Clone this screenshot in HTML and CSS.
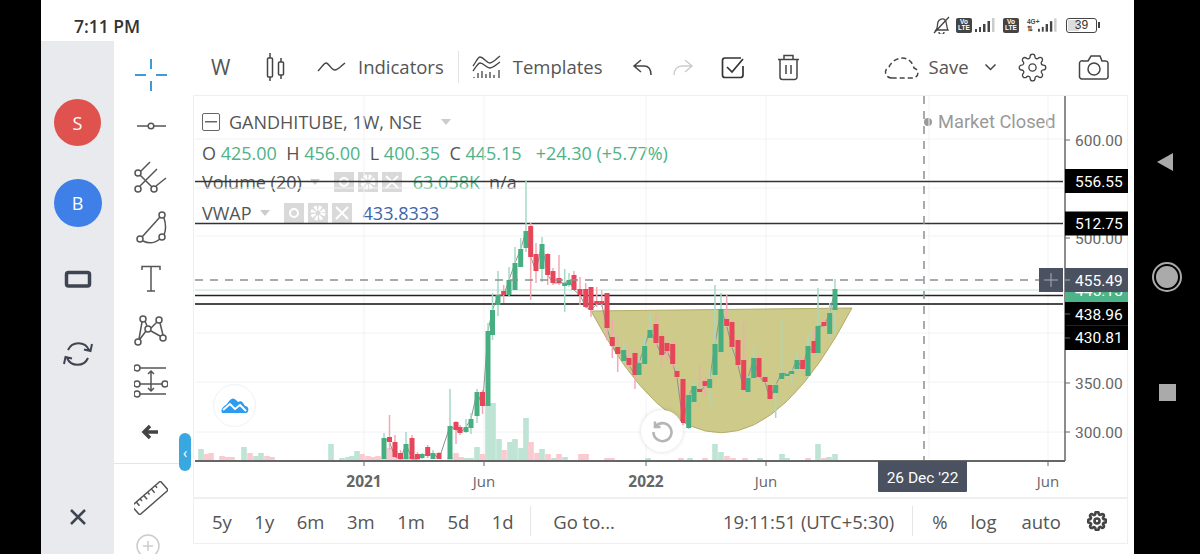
FILE: index.html
```html
<!DOCTYPE html>
<html lang="en">
<head>
    <meta charset="UTF-8">
    <meta name="viewport" content="width=device-width, initial-scale=1.0">
    <title>GANDHITUBE chart</title>
    <link rel="stylesheet" href="styles.css">
</head>
<body>
<div class="screen">
    <div class="phone">
        <div class="status">
            <span class="clock">7:11 PM</span>
            <div class="status-icons">
                <svg class="bell" viewBox="933 16 17 18"><path d="M936 30c2-2 1-5 2-8 1-3 5-4 7-2 2 2 1 6 3 10z M939 32a2.500 2.500 0 0 0 5 0 M934 33 949 17"/></svg>
                <span class="volte">Vo<br>LTE</span>
                <svg class="signal" viewBox="0 0 21 16"><rect x="0" y="12" width="2" height="3"/><rect x="4" y="10" width="2" height="5"/><rect x="8" y="7" width="2.500" height="8"/><rect x="12.500" y="4" width="2.500" height="11"/><rect class="off" x="17" y="1" width="2.500" height="14"/></svg>
                <span class="volte second">Vo<br>LTE</span>
                <span class="net">4G+<br>⇅</span>
                <svg class="signal short" viewBox="0 0 21 16"><rect x="0" y="12" width="2" height="3"/><rect x="4" y="10" width="2" height="5"/><rect x="8" y="7" width="2.500" height="8"/><rect x="12.500" y="4" width="2.500" height="11"/><rect class="off" x="17" y="1" width="2.500" height="14"/></svg>
                <span class="battery"><span class="battery-fill"></span><span class="battery-num">39</span></span>
                <span class="battery-tip"></span>
            </div>
        </div>

        <div class="app">
            <aside class="rail">
                <div class="avatar red">S</div>
                <div class="avatar blue">B</div>
                <svg class="rail-icon screen-icon" viewBox="60 262 34 34"><rect x="65.500" y="272.500" width="23" height="13.500" rx="2"/></svg>
                <svg class="rail-icon sync-icon" viewBox="60 337 34 34"><path d="M67 350A11.500 11.500 0 0 1 88 350 M91 344 89.500 351 83 349.500 M87 358A11.500 11.500 0 0 1 66 358 M63 364 64.500 357 71 358.500"/></svg>
                <svg class="rail-icon close-icon" viewBox="60 500 34 34"><path d="M70 510 84 524 M84 510 70 524"/></svg>
            </aside>

            <aside class="tools">
                <div class="tool-list">
                    <svg class="tool cross" viewBox="134 58 34 34"><path d="M135 75H146 M156 75H167 M151 59V69 M151 81V91"/></svg>
                    <svg class="tool" viewBox="134 109 34 34"><path d="M137 126H148 M154 126H166"/><circle cx="151" cy="126" r="2.800"/></svg>
                    <svg class="tool" viewBox="134 159 34 34"><path d="M140 174 152 186 M141 170 150 161 M140 185 157 168 M156 185 166 177"/><circle cx="138" cy="172" r="3"/><circle cx="138" cy="188" r="3"/><circle cx="154" cy="188" r="3"/></svg>
                    <svg class="tool" viewBox="134 211 34 34"><path d="M142 237 160 217 M164 218C166 224 166 230 164 235 M143 241C149 244 155 243 160 239"/><circle cx="162" cy="215" r="3"/><circle cx="140" cy="239" r="3"/><circle cx="162" cy="237" r="3"/></svg>
                    <svg class="tool" viewBox="134 261 34 34"><path d="M142 269V265.500H160V269 M151 265.500V290 M147 290H155"/></svg>
                    <svg class="tool" viewBox="134 311 34 34"><path d="M139 337 142 320 M140 337 146 329 M145 319 147 324 M151 326 157 320 M160 321 163 333 M151 329 160 334"/><circle cx="143" cy="317" r="3"/><circle cx="159" cy="318" r="3"/><circle cx="148" cy="327" r="3"/><circle cx="138" cy="340" r="3"/><circle cx="163" cy="336" r="3"/></svg>
                    <svg class="tool" viewBox="134 363 34 34"><path d="M140 367H166 M140 383H162 M140 393H166 M151 371V389 M148 373 151 370 154 373 M148 387 151 390 154 387"/><circle cx="137" cy="367" r="3"/><circle cx="137" cy="383" r="3"/><circle cx="165" cy="383" r="3"/><circle cx="137" cy="393" r="3"/></svg>
                    <svg class="tool back" viewBox="134 414 34 34"><path d="M150 425 144 431 150 437 M146 431H158"/></svg>
                </div>
                <div class="tool-foot">
                    <svg class="tool" viewBox="134 481 34 34"><g transform="rotate(-41 150 498)"><rect x="131" y="492" width="38" height="12" rx="1.500"/><path d="M137 492V497 M142 492V495 M147 492V497 M152 492V495 M157 492V497 M162 492V495"/></g></svg>
                    <svg class="tool plus" viewBox="134 532 28 28"><circle cx="148" cy="546" r="11"/><path d="M148 541V551 M143 546H153"/></svg>
                </div>
                <button class="collapse">‹</button>
            </aside>

            <main class="workspace">
                <div class="topbar">
                    <span class="tb-label tf">W</span>
                    <svg class="tb-icon candles" viewBox="264 52 24 30"><rect x="267.500" y="58" width="5" height="19" rx="1"/><rect x="278.500" y="62" width="5" height="13" rx="1"/><path d="M270 53V58 M270 77V81 M281 58V62 M281 75V79"/></svg>
                    <svg class="tb-icon wave" viewBox="316 60 30 18"><path d="M318 73C322 69 324 65 326 65 329 65 331 72 335 72 338 72 341 68 345 65"/></svg>
                    <span class="tb-label ind">Indicators</span>
                    <span class="tb-sep"></span>
                    <svg class="tb-icon tmpl" viewBox="472 54 30 26"><path d="M473 66C476 62 478 57 480 57 484 57 486 63 490 63 493 63 496 59 500 56 M473 71C476 67 478 63 480 63 484 63 486 68 490 68 493 68 496 65 500 62 M474 78V77 M478 78V73 M482 78V71 M486 78V74 M490 78V72 M494 78V75 M499 78V70"/></svg>
                    <span class="tb-label tpl">Templates</span>
                    <svg class="tb-icon undo" viewBox="631 57 22 20"><path d="M640 60 633 66 640 72 M633 66H643C648 66 650 70 650 75"/></svg>
                    <svg class="tb-icon redo" viewBox="671 57 22 20"><path d="M684 60 691 66 684 72 M691 66H681C676 66 673 70 673 75"/></svg>
                    <svg class="tb-icon check" viewBox="720 55 26 24"><path d="M741 58H725A2.500 2.500 0 0 0 722.500 60.500V75A2.500 2.500 0 0 0 725 77.500H741A2.500 2.500 0 0 0 743 75V66 M727 67 732 72 743 59"/></svg>
                    <svg class="tb-icon trash" viewBox="776 53 24 28"><path d="M778 59.500H799 M784 59V55.500H793V59 M780 60V77A2.500 2.500 0 0 0 782.500 79.500H794.500A2.500 2.500 0 0 0 797 77V60 M786 65V74 M791 65V74"/></svg>
                    <svg class="tb-icon cloud" viewBox="884 54 36 26"><path d="M892 78C885 78 883 70 889 67 893 57 910 53 914 68 920 70 919 78 912 78Z"/></svg>
                    <span class="tb-label save">Save</span>
                    <svg class="tb-icon chev" viewBox="985 62 13 10"><path d="M986.500 64.500 991.500 69.500 996.500 64.500"/></svg>
                    <svg class="tb-icon gear" viewBox="0 0 24 24"><circle cx="12" cy="12" r="3"/><path d="M19.400 15a1.650 1.650 0 0 0 .33 1.820l.06.06a2 2 0 0 1 0 2.830 2 2 0 0 1-2.830 0l-.06-.06a1.650 1.650 0 0 0-1.820-.33 1.650 1.650 0 0 0-1 1.510V21a2 2 0 0 1-2 2 2 2 0 0 1-2-2v-.09A1.650 1.650 0 0 0 9 19.400a1.650 1.650 0 0 0-1.820.33l-.06.06a2 2 0 0 1-2.830 0 2 2 0 0 1 0-2.830l.06-.06a1.650 1.650 0 0 0 .33-1.820 1.650 1.650 0 0 0-1.510-1H3a2 2 0 0 1-2-2 2 2 0 0 1 2-2h.09A1.650 1.650 0 0 0 4.600 9a1.650 1.650 0 0 0-.33-1.820l-.06-.06a2 2 0 0 1 0-2.830 2 2 0 0 1 2.830 0l.06.06a1.650 1.650 0 0 0 1.820.33H9a1.650 1.650 0 0 0 1-1.510V3a2 2 0 0 1 2-2 2 2 0 0 1 2 2v.09a1.650 1.650 0 0 0 1 1.510 1.650 1.650 0 0 0 1.820-.33l.06-.06a2 2 0 0 1 2.830 0 2 2 0 0 1 0 2.830l-.06.06a1.650 1.650 0 0 0-.33 1.820V9a1.650 1.650 0 0 0 1.510 1H21a2 2 0 0 1 2 2 2 2 0 0 1-2 2h-.09a1.650 1.650 0 0 0-1.510 1z"/></svg>
                    <svg class="tb-icon camera" viewBox="1078 54 31 26"><path d="M1083 61H1088L1091 56H1100L1102 61H1105A2.500 2.500 0 0 1 1108 63.500V76A2.500 2.500 0 0 1 1105 79H1082A2.500 2.500 0 0 1 1079.500 76V63.500A2.500 2.500 0 0 1 1083 61Z"/><circle cx="1094" cy="69" r="6"/></svg>
                </div>

                <div class="chart">
                    <div class="legend">
                        <div class="legend-row title">
                            <span class="fold"></span>
                            <span>GANDHITUBE, 1W, NSE</span>
                            <span class="caret big"></span>
                        </div>
                        <div class="legend-row ohlc">
                            O <b>425.00</b>&nbsp; H <b>456.00</b>&nbsp; L <b>400.35</b>&nbsp; C <b>445.15</b>&nbsp;&nbsp; <b>+24.30 (+5.77%)</b>
                        </div>
                        <div class="legend-row study vol">
                            <span>Volume (20)</span>
                            <span class="caret"></span>
                            <span class="study-btns">
                                <i class="sq"><svg viewBox="0 0 20 20"><circle cx="10" cy="10" r="4"/></svg></i>
                                <i class="sq"><svg viewBox="0 0 24 24"><circle cx="12" cy="12" r="6" stroke-dasharray="3 1.700" stroke-width="6"/></svg></i>
                                <i class="sq"><svg viewBox="0 0 20 20"><path d="M4 4 16 16 M16 4 4 16"/></svg></i>
                            </span>
                            <b>63.058K</b>
                            <span class="na">n/a</span>
                        </div>
                        <div class="legend-row study vwap">
                            <span>VWAP</span>
                            <span class="caret"></span>
                            <span class="study-btns">
                                <i class="sq"><svg viewBox="0 0 20 20"><circle cx="10" cy="10" r="4"/></svg></i>
                                <i class="sq"><svg viewBox="0 0 24 24"><circle cx="12" cy="12" r="6" stroke-dasharray="3 1.700" stroke-width="6"/></svg></i>
                                <i class="sq"><svg viewBox="0 0 20 20"><path d="M4 4 16 16 M16 4 4 16"/></svg></i>
                            </span>
                            <em>433.8333</em>
                        </div>
                    </div>
                    <div class="market"><span class="dot"></span>Market Closed</div>

                    <svg id="plot" class="plot" viewBox="193 95 935 402"></svg>

                    <div class="logo-btn">
                        <svg viewBox="0 0 28 16"><path d="M1 15C-1 11 3 8 5 7L9 2C11 0 13 0 15 2L17 4C19 3 21 3 22 5L24 8C27 8 28 11 27 13 27 15 25 15 24 15H3Z"/><path class="logo-cut" d="M2 12 9 6 14 11 19 7 25 13"/></svg>
                    </div>
                    <div class="reset-btn">
                        <svg viewBox="0 0 24 24"><path d="M5.500 7.500A9 9 0 1 1 3.500 13 M5 2.500V8H10.500"/></svg>
                    </div>
                </div>

                <div class="rangebar">
                    <span class="rg">5y</span>
                    <span class="rg">1y</span>
                    <span class="rg">6m</span>
                    <span class="rg">3m</span>
                    <span class="rg">1m</span>
                    <span class="rg">5d</span>
                    <span class="rg">1d</span>
                    <span class="rb-sep first"></span>
                    <span class="rg goto">Go to...</span>
                    <span class="rg clock-time">19:11:51 (UTC+5:30)</span>
                    <span class="rb-sep"></span>
                    <span class="rg pct">%</span>
                    <span class="rg log">log</span>
                    <span class="rg auto">auto</span>
                    <svg class="rb-gear" viewBox="0 0 24 24"><circle cx="12" cy="12" r="3"/><path d="M19.400 15a1.650 1.650 0 0 0 .33 1.820l.06.06a2 2 0 0 1 0 2.830 2 2 0 0 1-2.830 0l-.06-.06a1.650 1.650 0 0 0-1.820-.33 1.650 1.650 0 0 0-1 1.510V21a2 2 0 0 1-2 2 2 2 0 0 1-2-2v-.09A1.650 1.650 0 0 0 9 19.400a1.650 1.650 0 0 0-1.820.33l-.06.06a2 2 0 0 1-2.830 0 2 2 0 0 1 0-2.830l.06-.06a1.650 1.650 0 0 0 .33-1.820 1.650 1.650 0 0 0-1.510-1H3a2 2 0 0 1-2-2 2 2 0 0 1 2-2h.09A1.650 1.650 0 0 0 4.600 9a1.650 1.650 0 0 0-.33-1.820l-.06-.06a2 2 0 0 1 0-2.830 2 2 0 0 1 2.830 0l.06.06a1.650 1.650 0 0 0 1.820.33H9a1.650 1.650 0 0 0 1-1.510V3a2 2 0 0 1 2-2 2 2 0 0 1 2 2v.09a1.650 1.650 0 0 0 1 1.510 1.650 1.650 0 0 0 1.820-.33l.06-.06a2 2 0 0 1 2.830 0 2 2 0 0 1 0 2.830l-.06.06a1.650 1.650 0 0 0-.33 1.820V9a1.650 1.650 0 0 0 1.510 1H21a2 2 0 0 1 2 2 2 2 0 0 1-2 2h-.09a1.650 1.650 0 0 0-1.510 1z"/></svg>
                </div>
            </main>
        </div>
    </div>

    <div class="nav">
        <span class="nav-back"></span>
        <span class="nav-home"></span>
        <span class="nav-recent"></span>
    </div>
</div>
<script src="chart.js"></script>
</body>
</html>
```

FILE: styles.css
```css
* {
    box-sizing: border-box;
}
html, body {
    margin: 0;
    height: 100%;
    overflow: hidden;
    background: #000;
}
body {
    font-family: "Open Sans", Arial, sans-serif;
    color: #555;
}
svg {
    display: block;
    fill: none;
}
.screen {
    display: flex;
    height: 554px;
    padding-left: 41px;
    border-left: 0;
}
.phone {
    width: 1093px;
    display: flex;
    flex-direction: column;
    background: #fff;
}

/* status bar */
.status {
    height: 41px;
    display: flex;
    align-items: center;
    justify-content: space-between;
    padding: 0 34px 0 33px;
}
.clock {
    font-size: 17.5px;
    font-weight: 600;
    color: #333;
    margin-top: 10px;
}
.status-icons {
    display: flex;
    align-items: center;
    margin-top: 9px;
}
.bell {
    width: 17px;
    height: 18px;
    stroke: #444;
    stroke-width: 1.3;
    margin-right: 6px;
}
.volte {
    width: 16px;
    height: 15px;
    border-radius: 2px;
    background: #444;
    color: #fff;
    font: 700 6.5px/6.5px "Liberation Sans", sans-serif;
    text-align: center;
    padding-top: 1px;
}
.volte.second {
    margin-left: 7px;
}
.signal {
    width: 21px;
    height: 16px;
    margin-left: 3px;
    fill: #444;
}
.signal .off {
    fill: #ccc;
}
.signal.short {
    margin-left: 0;
    width: 20px;
}
.net {
    margin-left: 8px;
    width: 11px;
    font: 700 6.5px/7px "Liberation Sans", sans-serif;
    color: #444;
    white-space: nowrap;
}
.battery {
    position: relative;
    margin-left: 8px;
    width: 31px;
    height: 15px;
    border: 1.5px solid #444;
    border-radius: 3px;
    display: flex;
    align-items: center;
    justify-content: center;
}
.battery-fill {
    position: absolute;
    left: 1px;
    top: 1px;
    bottom: 1px;
    width: 11px;
    background: #ddd;
}
.battery-num {
    position: relative;
    font: 12px "Liberation Sans", sans-serif;
    color: #333;
}
.battery-tip {
    width: 2px;
    height: 6px;
    margin-left: 1px;
    background: #444;
}

.app {
    flex: 1;
    display: flex;
    min-height: 0;
}

/* grey rail with accounts */
.rail {
    width: 73px;
    background: #e9eaed;
    display: flex;
    flex-direction: column;
    align-items: center;
}
.avatar {
    width: 47px;
    height: 47px;
    border-radius: 50%;
    color: #fff;
    font-size: 18px;
    display: flex;
    align-items: center;
    justify-content: center;
}
.avatar.red {
    background: #e0524d;
    margin-top: 58px;
}
.avatar.blue {
    background: #3f7fe8;
    margin-top: 33px;
    width: 48px;
    height: 48px;
}
.rail-icon {
    width: 34px;
    height: 34px;
    stroke: #3f4452;
}
.screen-icon {
    margin-top: 35px;
    stroke-width: 3.5;
}
.sync-icon {
    margin-top: 41px;
    stroke-width: 2;
}
.close-icon {
    margin-top: 129px;
    stroke-width: 2.5;
}

/* drawing tools */
.tools {
    position: relative;
    width: 79px;
    overflow: visible;
    display: flex;
    flex-direction: column;
}
.tool-list {
    height: 423px;
    padding-top: 17px;
    padding-left: 20px;
    display: flex;
    flex-direction: column;
    border-bottom: 1px solid #e6e6e6;
    margin-right: 13px;
}
.tool {
    width: 34px;
    height: 34px;
    stroke: #555;
    stroke-width: 1.5;
    flex: none;
    margin-bottom: 17px;
}
.tool.cross {
    stroke: #3f9bd8;
    stroke-width: 2;
}
.tool.back {
    stroke: #444;
    stroke-width: 3.5;
    margin-bottom: 0;
}
.tool-foot {
    padding: 17px 0 0 20px;
    height: 90px;
    overflow: hidden;
}
.tool.plus {
    width: 28px;
    height: 28px;
    stroke: #ccc;
    margin: 0;
}
.collapse {
    position: absolute;
    right: 2px;
    top: 392px;
    width: 12px;
    height: 38px;
    padding: 0;
    border: 0;
    border-radius: 6px;
    background: #3aa8e0;
    color: #fff;
    font: 14px "Open Sans", sans-serif;
    z-index: 3;
}

/* main part */
.workspace {
    flex: 1;
    display: flex;
    flex-direction: column;
    margin-right: 6px;
    min-width: 0;
}
.topbar {
    height: 54px;
    display: flex;
    align-items: center;
    padding-bottom: 2px;
}
.tb-label {
    font-size: 18.5px;
    color: #555;
    line-height: 1;
}
.tb-icon {
    stroke: #444;
    stroke-width: 1.5;
    flex: none;
}
.tf {
    margin-left: 18px;
    font-size: 21px;
    width: 22px;
}
.candles {
    width: 24px;
    height: 30px;
    margin-left: 31px;
}
.wave {
    width: 30px;
    height: 18px;
    margin-left: 28px;
}
.ind {
    margin-left: 12px;
}
.tb-sep {
    width: 1px;
    height: 32px;
    background: #e3e3e3;
    margin-left: 14px;
}
.tmpl {
    width: 30px;
    height: 26px;
    margin-left: 13px;
    stroke-width: 1.3;
}
.tpl {
    margin-left: 11px;
}
.undo {
    width: 22px;
    height: 20px;
    margin-left: 29px;
}
.redo {
    width: 22px;
    height: 20px;
    margin-left: 18px;
    stroke: #ccc;
}
.check {
    width: 26px;
    height: 24px;
    margin-left: 26px;
    stroke: #333;
    stroke-width: 1.7;
}
.trash {
    width: 24px;
    height: 28px;
    margin-left: 30px;
}
.cloud {
    width: 36px;
    height: 26px;
    margin-left: 84px;
    stroke-dasharray: 5 3;
}
.save {
    margin-left: 9px;
}
.chev {
    width: 13px;
    height: 10px;
    margin-left: 15px;
}
.gear {
    width: 29px;
    height: 29px;
    margin-left: 21px;
    stroke-width: 1.100;
}
.camera {
    width: 31px;
    height: 26px;
    margin-left: 31px;
}

/* chart */
.chart {
    position: relative;
    height: 402px;
    border: 1px solid #efefef;
    border-bottom: 0;
}
.plot {
    position: absolute;
    left: -1px;
    top: -1px;
    width: 935px;
    height: 402px;
    z-index: 1;
}
.legend {
    position: absolute;
    left: 8px;
    top: 11px;
    font-size: 18px;
    color: #555;
    white-space: nowrap;
}
.legend-row {
    display: flex;
    align-items: center;
    height: 30px;
}
.legend-row.ohlc {
    display: block;
    line-height: 30px;
    margin-top: 1px;
}
.legend b {
    font-weight: 400;
    color: #4db388;
}
.legend em {
    font-style: normal;
    color: #3d66a8;
    margin-left: 11px;
}
.fold {
    width: 18px;
    height: 18px;
    border: 1.5px solid #666;
    border-radius: 2px;
    margin-right: 9px;
    background: linear-gradient(#666, #666) center / 12px 1.5px no-repeat;
}
.caret {
    width: 0;
    height: 0;
    margin-left: 8px;
    border: 5px solid transparent;
    border-top: 6px solid #ccc;
    border-bottom: 0;
}
.caret.big {
    margin-left: 19px;
}
.study-btns {
    display: flex;
    gap: 4px;
    margin-left: 14px;
}
.sq {
    display: block;
    width: 20px;
    height: 20px;
    background: #d9d9d9;
}
.sq svg {
    width: 20px;
    height: 20px;
    stroke: #fff;
    stroke-width: 2;
}
.study.vol {
    margin-top: -1px;
}
.study.vwap {
    margin-top: 1px;
}
.study.vol b {
    margin-left: 11px;
}
.na {
    margin-left: 9px;
}
.market {
    position: absolute;
    top: 14px;
    left: 730px;
    display: flex;
    align-items: center;
    font: 18.3px Roboto, sans-serif;
    color: #999;
    white-space: nowrap;
    line-height: 24px;
}
.dot {
    width: 8px;
    height: 8px;
    border-radius: 50%;
    background: #999;
    margin-right: 6px;
}
.axis-text {
    font: 15.5px Roboto, sans-serif;
    fill: #666;
}
.tag-text {
    font: 15.5px Roboto, sans-serif;
    fill: #fff;
}
.time-bold {
    font: 700 15.5px "Open Sans", sans-serif;
    fill: #666;
}
.time-text {
    font: 15px "Open Sans", sans-serif;
    fill: #666;
}
.logo-btn {
    position: absolute;
    left: 19px;
    top: 288px;
    width: 43px;
    height: 43px;
    border: 1px solid #eef2f8;
    border-radius: 50%;
    background: #fff;
    z-index: 2;
    display: flex;
    align-items: center;
    justify-content: center;
}
.logo-btn svg {
    width: 28px;
    height: 16px;
    fill: #2f9bef;
}
.logo-cut {
    fill: none;
    stroke: #fff;
    stroke-width: 2;
}
.reset-btn {
    position: absolute;
    left: 447px;
    top: 314px;
    width: 42px;
    height: 42px;
    border-radius: 50%;
    background: #fff;
    box-shadow: 0 0 4px rgba(0, 0, 0, .15);
    z-index: 2;
    display: flex;
    align-items: center;
    justify-content: center;
}
.reset-btn svg {
    width: 24px;
    height: 24px;
    stroke: #b5b5b5;
    stroke-width: 2.6;
}

/* bottom bar */
.rangebar {
    height: 47px;
    display: flex;
    align-items: center;
    padding-left: 18px;
    border: 1px solid #efefef;
    border-width: 2px 1px 1px;
}
.rg {
    font-size: 18.5px;
    color: #555;
    margin-right: 22.5px;
    white-space: nowrap;
}
.rb-sep {
    width: 1px;
    height: 30px;
    background: #e6e6e6;
    margin-right: 19px;
}
.rb-sep.first {
    margin-left: -6px;
    margin-right: 22px;
}
.goto {
    margin-right: 108px;
}
.clock-time {
    margin-right: 18px;
}
.pct {
    margin-right: 23px;
}
.log {
    margin-right: 25px;
}
.auto {
    margin-right: 26px;
}
.rb-gear {
    width: 20px;
    height: 20px;
    stroke: #444;
    stroke-width: 3.2;
}

/* android nav */
.nav {
    flex: 1;
    display: flex;
    flex-direction: column;
    align-items: center;
    padding-top: 153px;
}
.nav-back {
    width: 0;
    height: 0;
    border-top: 9px solid transparent;
    border-bottom: 9px solid transparent;
    border-right: 16px solid #aaa;
    margin-left: -5px;
}
.nav-home {
    width: 26px;
    height: 26px;
    margin-top: 93px;
    border-radius: 50%;
    background: #aaa;
    border: 2px solid #000;
    outline: 2px solid #aaa;
}
.nav-recent {
    width: 17px;
    height: 17px;
    margin-top: 94px;
    background: #aaa;
}
```

FILE: chart.js
```js
// weekly candles in page pixels: x, body top, body bottom, wick top, wick bottom, colour
const candles = [
    [384, 438, 459, 433, 459, 'g'], [389.5, 437, 442, 415, 450, 'r'], [395, 442, 457, 435, 457, 'r'],
    [400.5, 453, 459, 450, 459, 'r'], [406, 444, 459, 432, 459, 'g'], [412, 438, 459, 435, 459, 'r'],
    [417.5, 454, 459, 452, 459, 'r'], [422, 454, 458, 453, 459, 'g'], [427.7, 447, 456, 445, 458, 'r'],
    [433, 453, 459, 450, 459, 'g'], [439, 453, 459, 452, 459, 'r'], [450, 426, 459, 389, 459, 'g'],
    [456, 422, 430, 421, 444, 'r'], [460, 427, 433, 425, 435, 'r'], [466, 427, 432, 419, 433, 'g'],
    [471, 419, 428, 413, 434, 'g'], [477, 392, 416, 389, 423, 'g'], [482.5, 392, 406, 390, 414, 'r'],
    [488, 331, 406, 323, 406, 'g'], [492.5, 310, 335, 293, 340, 'g'], [498, 295, 305, 271, 316, 'g'],
    [503.7, 291, 295, 285, 303, 'r'], [509, 280, 295, 267, 297, 'g'], [515, 263, 290, 247, 290, 'g'],
    [520.7, 249, 267, 238, 267, 'g'], [526, 231, 248, 180, 252, 'g'], [530.7, 226, 257, 223, 300, 'r'],
    [536, 254, 271, 243, 283, 'r'], [542, 244, 269, 237, 282, 'g'], [547.7, 254, 275, 253, 285, 'r'],
    [553, 271, 283, 268, 285, 'r'], [559, 278, 283, 255, 285, 'r'], [564.7, 283, 286, 269, 312, 'g'],
    [569, 280, 285, 273, 287, 'g'], [574, 275, 290, 271, 290, 'r'], [580, 289, 295, 277, 305, 'r'],
    [585.7, 289, 307, 283, 308, 'r'], [591, 287, 310, 287, 317, 'r'], [596.7, 301, 304, 287, 307, 'r'],
    [601.7, 301, 304, 290, 307, 'r'], [607, 293, 328, 293, 340, 'r'], [612.3, 337, 346, 320, 358, 'r'],
    [617.7, 347, 354, 335, 372, 'r'], [623.7, 350, 361, 342, 363, 'g'], [629, 358, 365, 350, 367, 'r'],
    [635, 353, 375, 350, 389, 'r'], [639, 363, 375, 358, 376, 'g'], [644.7, 346, 364, 338, 366, 'g'],
    [650, 330, 338, 313, 340, 'g'], [656, 324, 343, 315, 347, 'r'], [661.7, 336, 355, 333, 367, 'r'],
    [667, 343, 351, 340, 360, 'r'], [672.7, 344, 364, 342, 368, 'r'], [677, 371, 377, 369, 378, 'r'],
    [683, 379, 423, 377, 425, 'r'], [688.7, 395, 428, 393, 429, 'g'], [694, 386, 402, 382, 403, 'g'],
    [699.7, 389, 392, 365, 393, 'r'], [705, 381, 386, 378, 395, 'r'], [709.7, 379, 388, 367, 405, 'g'],
    [715, 344, 375, 285, 375, 'g'], [721, 309, 352, 293, 353, 'g'], [726.7, 319, 326, 295, 327, 'r'],
    [732, 322, 347, 320, 348, 'r'], [738, 340, 365, 338, 366, 'r'], [743.7, 360, 390, 322, 392, 'r'],
    [748, 378, 392, 376, 393, 'g'], [753.7, 358, 378, 348, 379, 'g'], [759, 358, 377, 356, 378, 'r'],
    [765, 377, 382, 376, 383, 'r'], [770, 385, 399, 384, 400, 'r'], [775.7, 385, 393, 383, 418, 'g'],
    [781.7, 373, 379, 320, 380, 'g'], [787, 374, 376, 372, 378, 'g'], [791.7, 371, 374, 367, 385, 'g'],
    [797, 360, 369, 353, 371, 'g'], [802.7, 360, 369, 358, 370, 'r'], [808, 346, 376, 333, 377, 'g'],
    [814, 341, 353, 330, 354, 'r'], [818, 326, 353, 288, 353, 'g'], [824, 322, 326, 320, 328, 'r'],
    [829.7, 313, 334, 303, 340, 'g'], [835, 289, 310, 279, 333, 'g']
];

// volume bars: x, top, colour (base of all bars is 460)
const volumes = [
    [201, 449, 'g'], [206, 454, 'r'], [211, 453, 'r'], [222, 456, 'r'], [227, 457, 'r'], [232, 457, 'r'],
    [244, 447, 'g'], [250, 453, 'r'], [256, 456, 'g'], [261, 453, 'g'], [267, 456, 'r'], [272, 457, 'r'],
    [331, 444, 'g'], [342, 458, 'g'], [348, 457, 'g'], [352, 456, 'g'], [357, 451, 'g'], [362, 454, 'r'],
    [368, 456, 'r'], [373, 457, 'r'], [378, 456, 'r'], [384, 458, 'r'], [389.5, 448, 'r'], [395, 451, 'r'],
    [400.5, 456, 'r'], [406, 457, 'g'], [412, 456, 'r'], [417.5, 457, 'r'], [450, 457, 'g'], [456, 453, 'r'],
    [461, 457, 'r'], [466, 458, 'g'], [471, 458, 'g'], [477, 447, 'g'], [482.5, 454, 'r'], [488, 403, 'g'],
    [493, 403, 'g'], [499, 439, 'g'], [504, 450, 'r'], [510, 442, 'g'], [515, 439, 'g'], [521, 448, 'g'],
    [526, 418, 'g'], [531, 442, 'r'], [537, 453, 'r'], [542, 449, 'g'], [548, 454, 'r'], [554, 458, 'g'],
    [559, 454, 'r'], [565, 457, 'g'], [581, 454, 'r'], [586, 454, 'r'], [607, 458, 'r'], [612, 458, 'r'],
    [648, 458, 'g'], [681, 458, 'r'], [690, 458, 'g'], [705, 458, 'r'], [715, 444, 'g'], [721, 452, 'g'],
    [727, 456, 'r'], [733, 458, 'r'], [745, 458, 'r'], [760, 458, 'g'], [782, 454, 'g'], [787, 458, 'g'],
    [808, 458, 'r'], [818, 444, 'g'], [824, 458, 'r'], [829, 457, 'g'], [835, 454, 'g']
];

const plot = document.getElementById('plot');

function add(tag, attrs, text) {
    const el = document.createElementNS('http://www.w3.org/2000/svg', tag);
    for (const key in attrs) {
        el.setAttribute(key, attrs[key]);
    }
    if (text) {
        el.textContent = text;
    }
    plot.appendChild(el);
    return el;
}

function line(x1, y1, x2, y2, stroke, width, dash) {
    const attrs = { x1, y1, x2, y2, stroke, 'stroke-width': width };
    if (dash) {
        attrs['stroke-dasharray'] = dash;
    }
    add('line', attrs);
}

// grid
[139, 188, 236, 333, 382, 432].forEach(y => line(195, y, 1064, y, '#f1f2f5', 1));
[364, 484, 646, 766, 929, 1048].forEach(x => line(x, 96, x, 460, '#f1f2f5', 1));

// drawn lines
line(195, 290, 1064, 290, '#d5ece2', 1.5);
line(195, 181.5, 1063, 181.5, '#333', 1.5);
line(195, 223.5, 1063, 223.5, '#333', 1.5);
line(195, 295.5, 1063, 295.5, '#222', 1.5);
line(195, 304, 1063, 304, '#4a4a4a', 2);

// volume
volumes.forEach(v => {
    add('rect', { x: v[0] - 2.8, y: v[1], width: 5.6, height: 460 - v[1], fill: v[2] === 'g' ? '#bde4d4' : '#fbc9d0' });
});

// cup
add('path', { d: 'M591 311 Q722 556 852 308 Z', fill: '#cdca8a', stroke: '#b3ae6c', 'stroke-width': 1 });

// close line
add('polyline', {
    points: candles.map(c => c[0] + ',' + (c[5] === 'g' ? c[1] : c[2])).join(' '),
    fill: 'none', stroke: '#8d9391', 'stroke-width': 1
});

// candles
candles.forEach(c => {
    const green = c[5] === 'g';
    line(c[0], c[3], c[0], c[4], green ? '#a6d9c3' : '#f3a9b3', 1.5);
    add('rect', { x: c[0] - 2.5, y: c[1], width: 5, height: c[2] - c[1], fill: green ? '#46ae80' : '#e6455a' });
});

// crosshair
line(195, 280, 1040, 280, '#8a8f95', 1.5, '8 7');
line(924, 96, 924, 461, '#8a8f95', 1.5, '8 7');

// axes
line(1065, 96, 1065, 461, '#666', 1.5);
line(195, 461, 1065, 461, '#666', 2);
[364, 484, 646, 766, 1048].forEach(x => line(x, 461, x, 466, '#666', 1));
[140, 238, 383, 432].forEach(y => line(1065, y, 1070, y, '#666', 1));

function priceLabel(text, y) {
    add('text', { x: 1075, y: y + 5.5, class: 'axis-text' }, text);
}
function priceTag(text, top, height, fill, baseY) {
    add('rect', { x: 1065, y: top, width: 63, height, fill });
    add('text', { x: 1075, y: baseY, class: 'tag-text' }, text);
}
priceLabel('600.00', 140);
priceLabel('500.00', 238);
priceLabel('350.00', 383);
priceLabel('300.00', 432);

// order matters, the later tag hides the bottom or top of the one before
priceTag('445.15', 290, 12, '#4db388', 296);
priceTag('455.49', 268, 24, '#4a5160', 285.5);
priceTag('556.55', 169, 24, '#000', 186.5);
priceTag('512.75', 211.5, 24, '#000', 228.5);
priceTag('438.96', 302, 24, '#000', 319.5);
priceTag('430.81', 325, 25, '#000', 343);
line(1066, 325.5, 1128, 325.5, '#222', 1);
line(1065, 314, 1070, 314, '#666', 1);
line(1065, 338, 1070, 338, '#666', 1);
line(1065, 280, 1070, 280, '#aaa', 1);

// plus box on the crosshair
add('rect', { x: 1039, y: 268, width: 24, height: 24, fill: '#4a5160' });
line(1051, 273, 1051, 287, '#9aa0aa', 1.2);
line(1044, 280, 1058, 280, '#9aa0aa', 1.2);

// time axis
add('text', { x: 364, y: 487, class: 'time-bold', 'text-anchor': 'middle' }, '2021');
add('text', { x: 484, y: 487, class: 'time-text', 'text-anchor': 'middle' }, 'Jun');
add('text', { x: 646, y: 487, class: 'time-bold', 'text-anchor': 'middle' }, '2022');
add('text', { x: 766, y: 487, class: 'time-text', 'text-anchor': 'middle' }, 'Jun');
add('text', { x: 1048, y: 487, class: 'time-text', 'text-anchor': 'middle' }, 'Jun');
add('rect', { x: 878, y: 461, width: 89, height: 31, rx: 1, fill: '#4a5160' });
add('text', { x: 922.5, y: 482.5, class: 'tag-text', 'text-anchor': 'middle' }, "26 Dec '22");
```
